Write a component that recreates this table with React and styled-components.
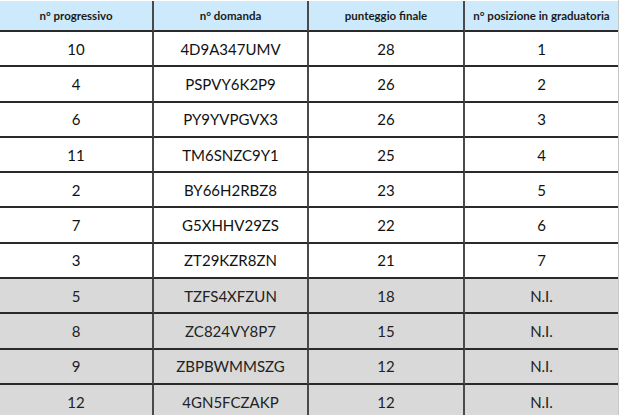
import React from "react";
import styled, { createGlobalStyle } from "styled-components";

const Global = createGlobalStyle`
  html, body { margin: 0; padding: 0; background: #ffffff; }
  body { font-family: Lato, "Noto Sans", sans-serif; overflow: hidden; }
`;

const Sheet = styled.div`
  width: 619px;
  height: 415px;
  overflow: hidden;
  background: #ffffff;
  border-right: 1px solid #c8c8c8;
  box-sizing: border-box;
`;

const Grid = styled.div`
  display: grid;
  grid-template-columns: 154px 155px 156px 153px;
  grid-auto-rows: auto;
  padding-top: 1px;
`;

const HeadCell = styled.div`
  height: 29px;
  background: #cdeafc;
  border-bottom: 2px solid #2a2a2a;
  border-right: ${(p) => (p.$last ? "none" : "2px solid #4a4a4a")};
  display: flex;
  align-items: center;
  justify-content: center;
  font-weight: 700;
  font-size: 11.5px;
  color: #1a1a1a;
  box-sizing: content-box;
  white-space: nowrap;
`;

const Cell = styled.div`
  height: 33.3px;
  background: ${(p) => (p.$grey ? "#d9d9d9" : "#ffffff")};
  border-bottom: 2px solid #2a2a2a;
  border-right: ${(p) => (p.$last ? "none" : "2px solid #4a4a4a")};
  display: flex;
  align-items: center;
  justify-content: center;
  font-size: 15px;
  color: ${(p) => (p.$grey ? "#222" : "#111")};
  box-sizing: content-box;
`;

const headers = [
  "n° progressivo",
  "n° domanda",
  "punteggio finale",
  "n° posizione in graduatoria",
];

const rows = [
  ["10", "4D9A347UMV", "28", "1"],
  ["4", "PSPVY6K2P9", "26", "2"],
  ["6", "PY9YVPGVX3", "26", "3"],
  ["11", "TM6SNZC9Y1", "25", "4"],
  ["2", "BY66H2RBZ8", "23", "5"],
  ["7", "G5XHHV29ZS", "22", "6"],
  ["3", "ZT29KZR8ZN", "21", "7"],
  ["5", "TZFS4XFZUN", "18", "N.I."],
  ["8", "ZC824VY8P7", "15", "N.I."],
  ["9", "ZBPBWMMSZG", "12", "N.I."],
  ["12", "4GN5FCZAKP", "12", "N.I."],
];

export default function App() {
  return (
    <>
      <Global />
      <Sheet>
        <Grid>
          {headers.map((h, i) => (
            <HeadCell key={h} $last={i === 3}>
              {h}
            </HeadCell>
          ))}
          {rows.map((r, ri) =>
            r.map((v, ci) => (
              <Cell
                key={ri + "-" + ci}
                $grey={r[3] === "N.I."}
                $last={ci === 3}
              >
                {v}
              </Cell>
            ))
          )}
        </Grid>
      </Sheet>
    </>
  );
}
